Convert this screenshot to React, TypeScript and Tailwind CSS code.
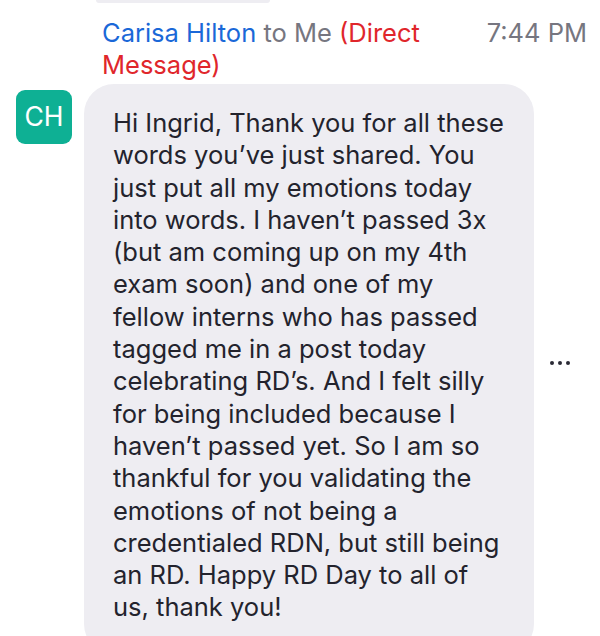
import React from "react";

const lines = [
  "Hi Ingrid, Thank you for all these",
  "words you’ve just shared. You",
  "just put all my emotions today",
  "into words. I haven’t passed 3x",
  "(but am coming up on my 4th",
  "exam soon) and one of my",
  "fellow interns who has passed",
  "tagged me in a post today",
  "celebrating RD’s. And I felt silly",
  "for being included because I",
  "haven’t passed yet. So I am so",
  "thankful for you validating the",
  "emotions of not being a",
  "credentialed RDN, but still being",
  "an RD. Happy RD Day to all of",
  "us, thank you!",
];

export default function App() {
  return (
    <div
      className="w-[600px] h-[636px] overflow-hidden bg-white"
      style={{ fontFamily: "Inter, 'Noto Sans', sans-serif" }}
    >
      <div className="ml-[96px] w-[174px] h-[3px] rounded-b-[3px] bg-[#eeedf2]" />
      <div className="flex justify-between pl-[102px] pr-[13px] pt-[14px] text-[25.5px] leading-[32px]">
        <div>
          <span className="text-[#1a68d8]">Carisa Hilton</span>
          <span className="text-[#767680]"> to Me </span>
          <span className="text-[#e0262b]">(Direct</span>
          <br />
          <span className="text-[#e0262b]">Message)</span>
        </div>
        <div className="text-[#767680]">7:44 PM</div>
      </div>
      <div className="flex items-start mt-[3px]">
        <div className="ml-[16px] mt-[6px] w-[56px] h-[54px] rounded-[9px] bg-[#0eb094] flex items-center justify-center text-white text-[26.5px]">
          CH
        </div>
        <div className="ml-[12px] w-[450px] rounded-[30px] bg-[#eeedf2] pl-[29px] pt-[23px] pb-[30px] text-[25.5px] leading-[32.3px] text-[#23232d] whitespace-nowrap">
          {lines.map((l, i) => (
            <div key={i}>{l}</div>
          ))}
        </div>
        <div className="flex items-center gap-[4px] ml-[16px] mt-[277px]">
          <span className="w-[4px] h-[4px] rounded-full bg-[#2a2a35]" />
          <span className="w-[4px] h-[4px] rounded-full bg-[#2a2a35]" />
          <span className="w-[4px] h-[4px] rounded-full bg-[#2a2a35]" />
        </div>
      </div>
    </div>
  );
}
